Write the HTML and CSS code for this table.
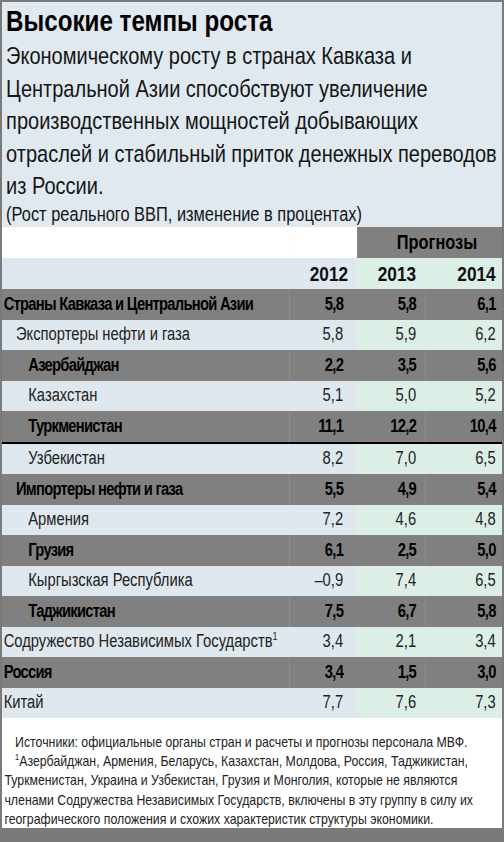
FILE: index.html
```html
<!DOCTYPE html>
<html lang="ru">
  <head>
    <meta charset="utf-8" />
    <title>Высокие темпы роста</title>
    <link rel="stylesheet" href="styles.css">
  </head>
  <body>
    <div class="chart">
      <!-- Liberation Sans squeezed horizontally stands in for Arial Narrow -->
      <div class="sheet">
        <div class="intro">
          <h1>Высокие темпы роста</h1>
          <p class="lead">
            Экономическому росту в странах Кавказа и<br>
            Центральной Азии способствуют увеличение<br>
            производственных мощностей добывающих<br>
            отраслей и стабильный приток денежных переводов<br>
            из России.
          </p>
          <p class="unit">(Рост реального ВВП, изменение в процентах)</p>
        </div>

        <table class="data">
          <colgroup>
            <col class="c-label">
            <col class="c-2012">
            <col class="c-2013">
            <col class="c-2014">
          </colgroup>
          <thead>
            <tr class="forecast">
              <th></th>
              <th></th>
              <th colspan="2">Прогнозы</th>
            </tr>
            <tr class="years">
              <th></th>
              <th>2012</th>
              <th class="fc">2013</th>
              <th class="fc">2014</th>
            </tr>
          </thead>
          <tbody>
            <tr class="dark">
              <td>Страны Кавказа и Центральной Азии</td>
              <td>5,8</td><td>5,8</td><td>6,1</td>
            </tr>
            <tr class="light">
              <td class="lvl1">Экспортеры нефти и газа</td>
              <td>5,8</td><td class="fc">5,9</td><td class="fc">6,2</td>
            </tr>
            <tr class="dark">
              <td class="lvl2">Азербайджан</td>
              <td>2,2</td><td>3,5</td><td>5,6</td>
            </tr>
            <tr class="light">
              <td class="lvl2">Казахстан</td>
              <td>5,1</td><td class="fc">5,0</td><td class="fc">5,2</td>
            </tr>
            <tr class="dark rule">
              <td class="lvl2">Туркменистан</td>
              <td>11,1</td><td>12,2</td><td>10,4</td>
            </tr>
            <tr class="light">
              <td class="lvl2">Узбекистан</td>
              <td>8,2</td><td class="fc">7,0</td><td class="fc">6,5</td>
            </tr>
            <tr class="dark">
              <td class="lvl1">Импортеры нефти и газа</td>
              <td>5,5</td><td>4,9</td><td>5,4</td>
            </tr>
            <tr class="light">
              <td class="lvl2">Армения</td>
              <td>7,2</td><td class="fc">4,6</td><td class="fc">4,8</td>
            </tr>
            <tr class="dark">
              <td class="lvl2">Грузия</td>
              <td>6,1</td><td>2,5</td><td>5,0</td>
            </tr>
            <tr class="light">
              <td class="lvl2">Кыргызская Республика</td>
              <td>–0,9</td><td class="fc">7,4</td><td class="fc">6,5</td>
            </tr>
            <tr class="dark">
              <td class="lvl2">Таджикистан</td>
              <td>7,5</td><td>6,7</td><td>5,8</td>
            </tr>
            <tr class="light">
              <td>Содружество Независимых Государств<sup>1</sup></td>
              <td>3,4</td><td class="fc">2,1</td><td class="fc">3,4</td>
            </tr>
            <tr class="dark">
              <td>Россия</td>
              <td>3,4</td><td>1,5</td><td>3,0</td>
            </tr>
            <tr class="light">
              <td>Китай</td>
              <td>7,7</td><td class="fc">7,6</td><td class="fc">7,3</td>
            </tr>
          </tbody>
        </table>

        <div class="notes">
          <p class="indent">Источники: официальные органы стран и расчеты и прогнозы персонала МВФ.</p>
          <p class="indent"><sup>1</sup>Азербайджан, Армения, Беларусь, Казахстан, Молдова, Россия, Таджикистан,<br>
            Туркменистан, Украина и Узбекистан, Грузия и Монголия, которые не являются<br>
            членами Содружества Независимых Государств, включены в эту группу в силу их<br>
            географического положения и схожих характеристик структуры экономики.</p>
        </div>
      </div>
    </div>
  </body>
</html>
```

FILE: styles.css
```css
body {
  margin: 0;
  font-family: "Liberation Sans", Arial, sans-serif;
  color: #111;
}

.chart {
  width: 500px;
  border: 2px solid #7a7a7a;
  border-bottom-width: 14px;
  background: #e0e9ef;
  overflow: hidden;
}

/* all horizontal sizes below are pre-squeeze (x / 0.82) */
.sheet {
  width: 610px;
  transform: scaleX(0.82);
  transform-origin: 0 0;
}

.intro {
  height: 225px;
  padding-left: 5px;
  white-space: nowrap;
}

h1 {
  margin: 0;
  font-size: 29.5px;
  line-height: 38px;
  font-weight: bold;
  color: #000;
}

.lead {
  margin: 0;
  font-size: 24.4px;
  line-height: 32.5px;
  color: #151515;
}

.unit {
  margin: 0;
  font-size: 20px;
  line-height: 22px;
  color: #151515;
}

/* table */
.data {
  width: 610px;
  border-collapse: collapse;
  table-layout: fixed;
}
.c-label { width: 351px; }
.c-2012 { width: 82px; }
.c-2013 { width: 83px; }
.c-2014 { width: 94px; }

.data th,
.data td {
  padding: 0 11px 0 0;
  height: 30.5px;
  text-align: right;
  font-size: 18px;
  white-space: nowrap;
}
.data td:nth-child(2) {
  padding-right: 17px;
}
.data th:last-child,
.data td:last-child {
  padding-right: 8px;
}
.data td:first-child {
  text-align: left;
  padding-left: 2px;
}
.data td.lvl1 { padding-left: 17px; }
.data td.lvl2 { padding-left: 32px; }

.forecast th {
  background: #fff;
  height: 31px;
}
.forecast th[colspan] {
  background: #808080;
  text-align: center;
  font-size: 20px;
  color: #000;
  padding: 0 0 0 18px;
}

.years th {
  background: #dfe8ee;
  font-size: 21px;
  height: 31px;
  color: #111;
}
.years th.fc,
.light td.fc {
  background: #dcefe6;
}

.light td {
  background: #dfe8ee;
  color: #222;
}

.dark td {
  background: #808080;
  font-weight: bold;
  letter-spacing: -0.9px;
  color: #000;
}
.rule td {
  border-bottom: 2px solid #000;
}

sup {
  font-size: 0.6em;
  line-height: 0;
}

.notes {
  background: #fff;
  height: 96px;
  padding: 14px 3px 0;
  font-size: 15px;
  line-height: 19.2px;
  color: #222;
  white-space: nowrap;
}
.notes p {
  margin: 0;
}
.notes .indent {
  text-indent: 13px;
}
```
